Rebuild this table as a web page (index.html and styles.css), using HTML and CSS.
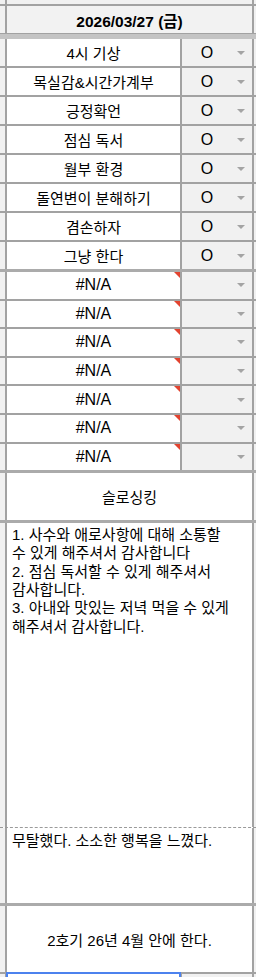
FILE: index.html
```html
<!DOCTYPE html>
<html lang="ko">
<head>
<meta charset="utf-8">
<title>2026/03/27</title>
<link rel="stylesheet" href="styles.css">
</head>
<body>
<div class="sheet">
  <div class="row r-top"><div class="edge"></div><div class="edge span"></div><div class="edge"></div></div>
  <div class="row r-head"><div class="edge"></div><div class="cell head span">2026/03/27 (금)</div><div class="edge"></div></div>
  <div class="band"></div>

  <div class="row r-o"><div class="edge"></div><div class="cell">4시 기상</div><div class="dd"><span>O</span><i class="arrow"></i></div><div class="edge"></div></div>
  <div class="row r-o"><div class="edge"></div><div class="cell">목실감&amp;시간가계부</div><div class="dd"><span>O</span><i class="arrow"></i></div><div class="edge"></div></div>
  <div class="row r-o"><div class="edge"></div><div class="cell">긍정확언</div><div class="dd"><span>O</span><i class="arrow"></i></div><div class="edge"></div></div>
  <div class="row r-o"><div class="edge"></div><div class="cell">점심 독서</div><div class="dd"><span>O</span><i class="arrow"></i></div><div class="edge"></div></div>
  <div class="row r-o"><div class="edge"></div><div class="cell">월부 환경</div><div class="dd"><span>O</span><i class="arrow"></i></div><div class="edge"></div></div>
  <div class="row r-o"><div class="edge"></div><div class="cell">돌연변이 분해하기</div><div class="dd"><span>O</span><i class="arrow"></i></div><div class="edge"></div></div>
  <div class="row r-o"><div class="edge"></div><div class="cell">겸손하자</div><div class="dd"><span>O</span><i class="arrow"></i></div><div class="edge"></div></div>
  <div class="row r-o thick"><div class="edge"></div><div class="cell">그냥 한다</div><div class="dd"><span>O</span><i class="arrow"></i></div><div class="edge"></div></div>

  <div class="row r-na"><div class="edge"></div><div class="cell latin">#N/A<i class="flag"></i></div><div class="dd"><span></span><i class="arrow"></i></div><div class="edge"></div></div>
  <div class="row r-na"><div class="edge"></div><div class="cell latin">#N/A<i class="flag"></i></div><div class="dd"><span></span><i class="arrow"></i></div><div class="edge"></div></div>
  <div class="row r-na"><div class="edge"></div><div class="cell latin">#N/A<i class="flag"></i></div><div class="dd"><span></span><i class="arrow"></i></div><div class="edge"></div></div>
  <div class="row r-na"><div class="edge"></div><div class="cell latin">#N/A<i class="flag"></i></div><div class="dd"><span></span><i class="arrow"></i></div><div class="edge"></div></div>
  <div class="row r-na"><div class="edge"></div><div class="cell latin">#N/A<i class="flag"></i></div><div class="dd"><span></span><i class="arrow"></i></div><div class="edge"></div></div>
  <div class="row r-na"><div class="edge"></div><div class="cell latin">#N/A<i class="flag"></i></div><div class="dd"><span></span><i class="arrow"></i></div><div class="edge"></div></div>
  <div class="row r-na thick"><div class="edge"></div><div class="cell latin">#N/A<i class="flag"></i></div><div class="dd"><span></span><i class="arrow"></i></div><div class="edge"></div></div>

  <div class="row r-title thick"><div class="edge"></div><div class="cell span">슬로싱킹</div><div class="edge"></div></div>

  <div class="row r-gratitude dotted"><div class="edge"></div><div class="cell span text">1. 사수와 애로사항에 대해 소통할<br>수 있게 해주셔서 감사합니다<br>2. 점심 독서할 수 있게 해주셔서<br>감사합니다.<br>3. 아내와 맛있는 저녁 먹을 수 있게<br>해주셔서 감사합니다.</div><div class="edge"></div></div>

  <div class="row r-note thick"><div class="edge"></div><div class="cell span text note">무탈했다. 소소한 행복을 느꼈다.</div><div class="edge"></div></div>

  <div class="row r-goal"><div class="edge"></div><div class="cell span">2호기 26년 4월 안에 한다.</div><div class="edge"></div></div>

  <div class="row r-last"><div class="edge"></div><div class="cell sel-host"><i class="selection"></i></div><div class="dd"></div><div class="edge"></div></div>
</div>
</body>
</html>
```
FILE: styles.css
```css
* {
  box-sizing: border-box;
  margin: 0;
  padding: 0;
}

html,
body {
  width: 256px;
  height: 977px;
  overflow: hidden;
  background: #ffffff;
}

body {
  font-family: "Liberation Sans", "Noto Sans CJK KR", Arial, sans-serif;
  font-size: 15px;
  color: #000000;
}

.sheet {
  display: flex;
  flex-direction: column;
}

.row {
  display: grid;
  grid-template-columns: 5px 173px 70px 1fr;
  column-gap: 2px;
  background: #a2a2a2;
  background-clip: padding-box;
  border-bottom: 2px solid #a2a2a2;
  flex: none;
}

.row.thick {
  border-bottom: 3px solid #ababab;
}

.row.dotted {
  border-bottom: 1px dashed #9a9a9a;
}

.edge {
  background: #f1f1f1;
}

.span {
  grid-column: 2 / 4;
}

.cell {
  background: #ffffff;
  display: flex;
  align-items: center;
  justify-content: center;
  position: relative;
  white-space: nowrap;
}

.latin {
  font-size: 16px;
}

.head {
  background: #f2f2f2;
  font-weight: bold;
  font-size: 15.5px;
}

.band {
  height: 5px;
  background: #c4c4c4;
  flex: none;
}

.dd {
  background: #f1f1f1;
  display: grid;
  grid-template-columns: 1fr 8px;
  column-gap: 5px;
  padding-right: 7px;
  align-items: center;
  text-align: center;
  font-size: 16px;
}

.arrow {
  width: 0;
  height: 0;
  border-left: 4px solid transparent;
  border-right: 4px solid transparent;
  border-top: 4px solid #a4a4a4;
}

.flag {
  position: absolute;
  top: 0;
  right: 0;
  width: 0;
  height: 0;
  border-top: 6px solid #e2432f;
  border-left: 6px solid transparent;
}

.text {
  display: block;
  padding: 3px 5px 0;
  line-height: 18.3px;
}

.note {
  padding-top: 4px;
}

.r-top { height: 6px; }
.r-head { height: 28px; border-bottom-width: 1px; }
.r-o { height: 29px; }
.r-o.thick { height: 30px; }
.r-na { height: 28.6px; }
.r-na.thick { height: 29.6px; }
.r-title { height: 50px; }
.r-gratitude { height: 305px; }
.r-note { height: 78px; }
.r-goal { height: 68px; }
.r-last { height: 12px; border-bottom: 0; }

.selection {
  position: absolute;
  top: -2px;
  left: -1px;
  right: -1px;
  height: 14px;
  border: 2px solid #4c82ee;
  border-bottom: 0;
}
```
